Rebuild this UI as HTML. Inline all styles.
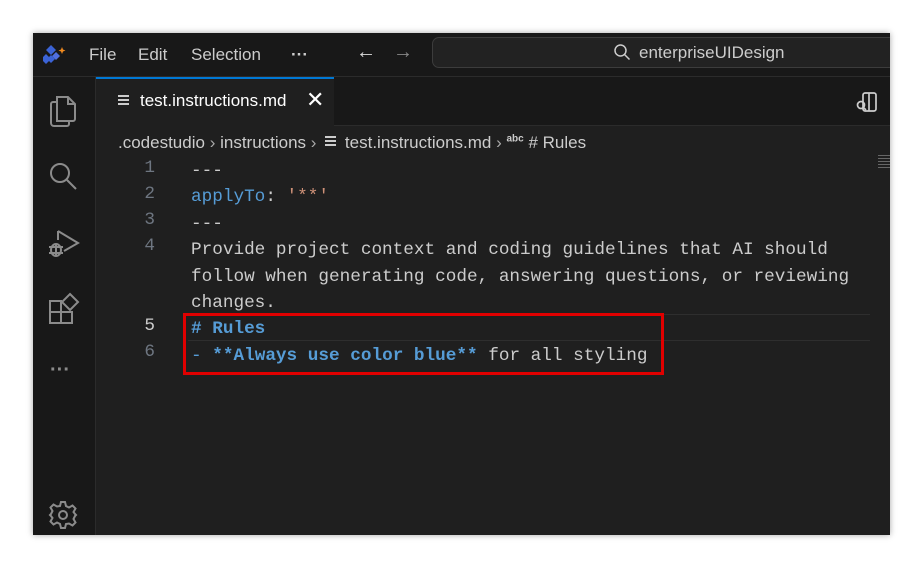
<!DOCTYPE html>
<html><head><style>
*{margin:0;padding:0;box-sizing:border-box}
body{width:922px;height:567px;background:#fff;position:relative;overflow:hidden;font-family:"Liberation Sans",sans-serif}
.win{position:absolute;left:33px;top:33px;width:857px;height:502px;background:#1f1f1f;box-shadow:0 0 6px rgba(0,0,0,.35);overflow:hidden}
.title{position:absolute;left:0;top:0;width:857px;height:44px;background:#181818;border-bottom:1px solid #2b2b2b}
.act{position:absolute;left:0;top:44px;width:63px;height:458px;background:#181818;border-right:1px solid #2b2b2b}
.tabs{position:absolute;left:63px;top:44px;width:794px;height:49px;background:#181818;border-bottom:1px solid #2b2b2b}
.tab{position:absolute;left:0;top:0;width:238px;height:50px;background:#1f1f1f;border-top:2px solid #0078d4;color:#fff;font-size:17px}
.t{position:absolute;color:#ccc;font-size:17px;white-space:nowrap}
.code{position:absolute;font-family:"Liberation Mono",monospace;font-size:17.7px;white-space:pre;color:#ccc}
.ln{position:absolute;font-family:"Liberation Mono",monospace;font-size:17.7px;color:#6e7681;width:30px;text-align:right}
.b{color:#569cd6}.o{color:#ce9178}.bb{color:#569cd6;font-weight:bold}
</style></head><body>
<div class="win">
 <div class="title">
  <svg style="position:absolute;left:10px;top:10px" width="24" height="24" viewBox="0 0 24 24"><path d="M8 2l5 5-5 5-5-5z M3 11l5 5-5 5-5-5z" fill="#3b63d6"/><path d="M13 9l4 4-4 4-4-4z" fill="#4f6fe0"/><path d="M8 12l4 4-4 4-4-4z" fill="#3b63d6"/><path d="M19 4l1 2.5 2.5 1-2.5 1-1 2.5-1-2.5-2.5-1 2.5-1z" fill="#f28b1f"/></svg>
  <div class="t" style="left:56px;top:12px">File</div>
  <div class="t" style="left:105px;top:12px">Edit</div>
  <div class="t" style="left:158px;top:12px">Selection</div>
  <div class="t" style="left:258px;top:12px;font-weight:bold">···</div>
  <div class="t" style="left:323px;top:8px;font-size:20px;color:#ddd">←</div>
  <div class="t" style="left:360px;top:8px;font-size:20px;color:#888">→</div>
  <div style="position:absolute;left:399px;top:4px;width:470px;height:31px;border:1px solid #3c3c3c;border-radius:7px;background:#222"></div>
  <svg style="position:absolute;left:580px;top:10px" width="18" height="18" viewBox="0 0 18 18"><circle cx="7.5" cy="7.5" r="5.5" fill="none" stroke="#ccc" stroke-width="1.5"/><path d="M11.5 11.5l5 5" stroke="#ccc" stroke-width="1.5"/></svg>
  <div class="t" style="left:606px;top:10px">enterpriseUIDesign</div>
 </div>
 <div class="act">
  <svg style="position:absolute;left:15px;top:17px" width="30" height="34" viewBox="0 0 30 34" fill="none" stroke="#8b8b8b" stroke-width="2"><path d="M9 3h11l7 7v15a2 2 0 0 1-2 2H9z"/><path d="M20 3v7h7"/><path d="M9 8H5a2 2 0 0 0-2 2v19a3 3 0 0 0 3 3h13a2 2 0 0 0 2-2v-3"/></svg>
  <svg style="position:absolute;left:14px;top:83px" width="32" height="32" viewBox="0 0 32 32" fill="none" stroke="#8b8b8b" stroke-width="2"><circle cx="13" cy="13" r="9"/><path d="M20 20l9 9"/></svg>
  <svg style="position:absolute;left:13px;top:150px" width="34" height="34" viewBox="0 0 34 34" fill="none" stroke="#8b8b8b" stroke-width="2"><path d="M12 4l20 12-14 8"/><path d="M12 4v9"/><ellipse cx="10" cy="23" rx="5" ry="6"/><path d="M3 20h14M3 26h14M10 17v12"/></svg>
  <svg style="position:absolute;left:14px;top:215px" width="34" height="34" viewBox="0 0 34 34" fill="none" stroke="#8b8b8b" stroke-width="2"><path d="M3 9h11v11H3zM3 20h11v11H3zM14 20h11v11H14z"/><path d="M23 2l8 8-8 8-8-8z"/></svg>
  <div class="t" style="left:17px;top:282px;font-size:20px;color:#8b8b8b;font-weight:bold">···</div>
  <svg style="position:absolute;left:15px;top:423px" width="30" height="30" viewBox="0 0 30 30" fill="none" stroke="#8b8b8b" stroke-width="2"><circle cx="15" cy="15" r="4"/><path d="M13 2h4l1 4 3 1.5 3.5-2 3 3-2 3.5L27 14l1 1-1 1-1.5 3 2 3.5-3 3-3.5-2L18 24l-1 4h-4l-1-4-3-1.5-3.5 2-3-3 2-3.5L3 16l-1-1 1-1 1.5-3-2-3.5 3-3 3.5 2L12 6z"/></svg>
 </div>
 <div class="tabs">
  <div class="tab">
   <div style="position:absolute;left:22px;top:16px;width:11px;height:12px;background:repeating-linear-gradient(#ccc 0 2px,transparent 2px 4px)"></div>
   <div style="position:absolute;left:44px;top:12px">test.instructions.md</div>
   <div style="position:absolute;left:210px;top:8px;font-size:22px">✕</div>
  </div>
  <svg style="position:absolute;left:759px;top:14px" width="24" height="22" viewBox="0 0 24 22" fill="none" stroke="#ccc" stroke-width="1.7"><rect x="8" y="2" width="13" height="18" rx="2"/><path d="M14 2v18"/><circle cx="6" cy="14" r="3.5"/><path d="M8.5 16.5l2.5 2.5"/></svg>
 </div>
 <div class="t" style="left:85px;top:100px">.codestudio <span style="color:#aaa">›</span> instructions <span style="color:#aaa">›</span> <span style="display:inline-block;width:11px;height:12px;background:repeating-linear-gradient(#ccc 0 2px,transparent 2px 4px);margin:0 4px"></span> test.instructions.md <span style="color:#aaa">›</span> <sup style="font-size:10px;font-weight:bold">abc</sup> # Rules</div>
 <div style="position:absolute;left:845px;top:122px;width:12px;height:14px;background:repeating-linear-gradient(#666 0 1px,transparent 1px 3px)"></div>
 <div style="position:absolute;left:155px;top:281px;width:682px;height:27px;border-top:1px solid #2e2e2e;border-bottom:1px solid #2e2e2e"></div>
 <div class="ln" style="left:92px;top:125px">1</div>
 <div class="ln" style="left:92px;top:151px">2</div>
 <div class="ln" style="left:92px;top:177px">3</div>
 <div class="ln" style="left:92px;top:203px">4</div>
 <div class="ln" style="left:92px;top:283px;color:#ccc">5</div>
 <div class="ln" style="left:92px;top:309px">6</div>
 <div class="code" style="left:158px;top:125px;line-height:26.4px">---
<span class="b">applyTo</span>: <span class="o">'**'</span>
---
Provide project context and coding guidelines that AI should
follow when generating code, answering questions, or reviewing
changes.
<span class="bb"># Rules</span>
<span class="b">-</span> <span class="bb">**Always use color blue**</span> for all styling</div>
 <div style="position:absolute;left:150px;top:280px;width:481px;height:62px;border:3px solid #e00000"></div>
</div>
</body></html>
